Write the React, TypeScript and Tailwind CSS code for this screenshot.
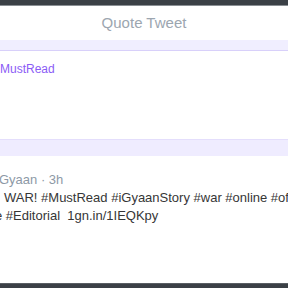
export default function App() {
  const font = { fontFamily: '"Liberation Sans", Arial, sans-serif' };
  return (
    <div className="w-[288px] h-[288px] overflow-hidden bg-white flex flex-col" style={font}>
      <div className="h-[5px] bg-[#3b4046] shrink-0" />
      <div className="h-[1px] bg-[#8a8f94] shrink-0" />
      <div className="h-[34px] shrink-0 flex items-center justify-center text-[15px] text-[#9ca6b0] pt-[1px]">
        Quote Tweet
      </div>
      <div className="h-[10px] bg-[#f0eeff] shrink-0" />
      <div className="h-[1px] bg-[#d8d0fa] shrink-0" />
      <div className="h-[88px] shrink-0 bg-white pt-[10px]">
        <div className="whitespace-nowrap text-[12px] leading-[16px] text-[#8b5cf6]">MustRead</div>
      </div>
      <div className="h-[1px] bg-[#e4defc] shrink-0" />
      <div className="h-[16px] bg-[#efecff] shrink-0" />
      <div className="flex-1 bg-white pt-[15px] overflow-hidden">
        <div className="whitespace-nowrap text-[13px] leading-[18px] text-[#8d99a6] -ml-[1px]">Gyaan · 3h</div>
        <div className="whitespace-nowrap text-[13px] leading-[18px] text-[#363636] pl-[4px]">
          WAR! #MustRead #iGyaanStory #war #online #offline
        </div>
        <div className="whitespace-nowrap text-[13px] leading-[18px] text-[#363636] -ml-[5px]">
          e #Editorial&nbsp;&nbsp;1gn.in/1IEQKpy
        </div>
      </div>
      <div className="h-[1px] bg-[#5a5f64] shrink-0" />
      <div className="h-[4px] bg-[#3b4046] shrink-0" />
    </div>
  );
}
